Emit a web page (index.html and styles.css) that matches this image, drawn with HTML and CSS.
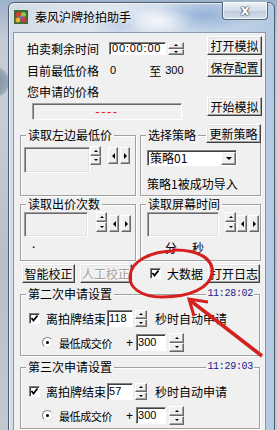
FILE: index.html
```html
<!DOCTYPE html>
<html lang="zh-CN">
<head>
    <meta charset="UTF-8">
    <meta name="viewport" content="width=device-width, initial-scale=1.0">
    <title>秦风沪牌抢拍助手</title>
    <link rel="stylesheet" href="styles.css">
</head>
<body>
<div class="desk">
    <div class="win">
        <div class="titlebar">
            <svg class="app-icon" width="14" height="14" viewBox="0 0 14 14">
                <rect width="14" height="14" fill="#3d6a35"/>
                <circle cx="5" cy="5" r="3" fill="#d8402e"/>
                <circle cx="9.5" cy="4.5" r="2.5" fill="#8cc84b"/>
                <circle cx="4" cy="10" r="2.5" fill="#e6b43a"/>
                <circle cx="9.5" cy="9.5" r="3" fill="#c93a52"/>
                <circle cx="7" cy="7" r="1.5" fill="#4d86d0"/>
            </svg>
            <span class="title">秦风沪牌抢拍助手</span>
            <span class="close-btn">x</span>
        </div>

        <div class="client">
            <div class="top">
                <div class="top-left">
                    <div class="row r1">
                        <span class="lbl">拍卖剩余时间</span>
                        <span class="field timebox">00:00:00</span>
                        <span class="ud ud-time"><i class="up"></i><i class="dn"></i></span>
                    </div>
                    <div class="row r2">
                        <span class="lbl">目前最低价格</span>
                        <span class="num low">0</span>
                        <span class="to">至</span>
                        <span class="num high">300</span>
                    </div>
                    <div class="row r3"><span class="lbl">您申请的价格</span></div>
                    <div class="pricebox"><span class="dash">----</span></div>
                </div>
                <div class="top-right">
                    <button class="btn">打开模拟</button>
                    <button class="btn b-save">保存配置</button>
                    <button class="btn b-start">开始模拟</button>
                </div>
            </div>

            <div class="groups">
                <div class="group">
                    <div class="ghead"><span class="gt">读取左边最低价</span></div>
                    <div class="gbody g1">
                        <span class="readbox rb1"></span>
                        <span class="ud ud-g1"><i class="up"></i><i class="dn"></i></span>
                        <span class="lr lr-g1"><i class="al"></i><i class="ar"></i></span>
                    </div>
                </div>
                <div class="group">
                    <div class="ghead"><span class="gt">选择策略</span><button class="btn b-upd">更新策略</button></div>
                    <div class="gbody g3">
                        <div class="combo"><span class="combo-text">策略01</span><span class="combo-btn"><i class="dn"></i></span></div>
                        <div class="note">策略1被成功导入</div>
                    </div>
                </div>
                <div class="group">
                    <div class="ghead"><span class="gt">读取出价次数</span></div>
                    <div class="gbody g2">
                        <span class="readbox rb2"></span>
                        <span class="ud ud-g2"><i class="up"></i><i class="dn"></i></span>
                        <span class="lr lr-g2"><i class="al"></i><i class="ar"></i></span>
                    </div>
                    <div class="dot">.</div>
                </div>
                <div class="group">
                    <div class="ghead"><span class="gt">读取屏幕时间</span></div>
                    <div class="gbody g4">
                        <span class="readbox rb4"></span>
                        <span class="ud ud-g4"><i class="up"></i><i class="dn"></i></span>
                        <span class="lr lr-g4"><i class="al"></i><i class="ar"></i></span>
                    </div>
                    <div class="minsec"><span>分</span><span class="sec">秒</span></div>
                </div>
            </div>

            <div class="btnrow">
                <button class="btn b-smart">智能校正</button>
                <button class="btn b-manual" disabled>人工校正</button>
                <span class="chk chk-big"><svg width="9" height="9" viewBox="0 0 9 9"><polyline points="1.5,4 3.5,6.5 7.5,1.5" fill="none" stroke="#000" stroke-width="1.8"/></svg></span>
                <span class="chk-text">大数据</span>
                <button class="btn b-log">打开日志</button>
            </div>

            <div class="group apply first">
                <div class="ghead"><span class="gt">第二次申请设置</span><span class="gtime">11:28:02</span></div>
                <div class="arow ar1">
                    <span class="chk"><svg width="9" height="9" viewBox="0 0 9 9"><polyline points="1.5,4 3.5,6.5 7.5,1.5" fill="none" stroke="#000" stroke-width="1.8"/></svg></span>
                    <span class="alabel">离拍牌结束</span>
                    <span class="field inp inp-sec">118</span>
                    <span class="ud ud-r1"><i class="up"></i><i class="dn"></i></span>
                    <span class="atext">秒时自动申请</span>
                </div>
                <div class="arow ar2">
                    <span class="radio"></span>
                    <span class="alabel small">最低成交价</span>
                    <span class="plus">+</span>
                    <span class="field inp inp-add">300</span>
                    <span class="ud ud-r2"><i class="up"></i><i class="dn"></i></span>
                </div>
            </div>

            <div class="group apply">
                <div class="ghead"><span class="gt">第三次申请设置</span><span class="gtime">11:29:03</span></div>
                <div class="arow ar1">
                    <span class="chk"><svg width="9" height="9" viewBox="0 0 9 9"><polyline points="1.5,4 3.5,6.5 7.5,1.5" fill="none" stroke="#000" stroke-width="1.8"/></svg></span>
                    <span class="alabel">离拍牌结束</span>
                    <span class="field inp inp-sec">57</span>
                    <span class="ud ud-r1"><i class="up"></i><i class="dn"></i></span>
                    <span class="atext">秒时自动申请</span>
                </div>
                <div class="arow ar2">
                    <span class="radio"></span>
                    <span class="alabel small">最低成交价</span>
                    <span class="plus">+</span>
                    <span class="field inp inp-add">300</span>
                    <span class="ud ud-r2"><i class="up"></i><i class="dn"></i></span>
                </div>
            </div>
        </div>
    </div>

    <!-- red annotation drawn over the screenshot -->
    <svg class="annot" width="277" height="430" viewBox="0 0 277 430">
        <path d="M172 250 C198 249 214 259 212 273 C210 288 190 297 162 297 C140 297 129 287 130 276 C131 262 149 251 175 251" fill="none" stroke="#d4211f" stroke-width="3"/>
        <path d="M262 356 L191 301" stroke="#d4211f" stroke-width="3.5"/>
        <path d="M208 302 L189 299 L194 316" fill="none" stroke="#d4211f" stroke-width="3"/>
    </svg>
</div>
</body>
</html>
```

FILE: styles.css
```css
* {
    box-sizing: border-box;
    margin: 0;
    padding: 0;
}

body {
    width: 277px;
    height: 430px;
    overflow: hidden;
    font-family: "Noto Sans CJK SC", "Liberation Sans", sans-serif;
    font-size: 12px;
    line-height: 13px;
    color: #000;
}

.desk {
    position: relative;
    width: 277px;
    height: 430px;
    overflow: hidden;
    padding: 2px 0 0 8px;
    background:
        radial-gradient(circle at -6px 82px, #7f8c9b 0, #9ba7b5 14px, rgba(0, 0, 0, 0) 16px),
        linear-gradient(180deg, #9db2c9 0, #c3ccd6 40px, #c8cdd3 120px, #b9bfc6 260px, #c4c9cf 430px);
}

/* window frame (glass) */
.win {
    width: 267px;
    height: 440px;
    padding: 0 8px 0 4px;
    border: 1px solid #4b5c73;
    border-radius: 6px 6px 0 0;
    background:
        radial-gradient(ellipse 34px 14px at 150px 18px, rgba(255, 255, 255, 0.8), rgba(255, 255, 255, 0)),
        radial-gradient(ellipse 50px 18px at 195px 12px, rgba(110, 150, 205, 0.55), rgba(110, 150, 205, 0)),
        radial-gradient(ellipse 30px 16px at 110px 22px, rgba(150, 180, 220, 0.45), rgba(150, 180, 220, 0)),
        linear-gradient(90deg, #d3dce6 0, #dfe7f0 40%, #c9d8e9 70%, #b4c9e0 100%);
    box-shadow: inset 1px 1px 0 rgba(255, 255, 255, 0.6);
}

.titlebar {
    display: flex;
    align-items: flex-start;
    height: 29px;
}

.app-icon {
    margin: 7px 0 0 1px;
}

.title {
    margin: 7px 0 0 7px;
    line-height: 14px;
    text-shadow: 0 0 4px rgba(255, 255, 255, 0.9);
}

.close-btn {
    width: 46px;
    height: 18px;
    margin: -1px -2px 0 auto;
    border: 1px solid #56677e;
    border-top: none;
    border-radius: 0 0 4px 4px;
    background: linear-gradient(180deg, #eef3f8 0, #d3dde9 50%, #bccbdc 51%, #d6e0eb 100%);
    box-shadow: inset 0 0 0 1px rgba(255, 255, 255, 0.7);
    text-align: center;
    font: bold 14px/16px "DejaVu Sans", sans-serif;
    color: #fff;
    text-shadow: 0 0 1px #2c3644, 0 0 1px #2c3644, 0 0 2px #2c3644;
}

/* client area */
.client {
    width: 253px;
    height: 400px;
    background: #f0f0f0;
    border: 1px solid #8a99ad;
}

/* classic controls */
.btn {
    display: block;
    width: 55px;
    height: 19px;
    font: 12px/17px "Noto Sans CJK SC", sans-serif;
    color: #000;
    text-align: center;
    background: #f0f0f0;
    border: 1px solid;
    border-color: #fff #404040 #404040 #fff;
    box-shadow: inset -1px -1px 0 #a0a0a0, inset 1px 1px 0 #e3e3e3;
}

.btn:disabled {
    color: #a0a0a0;
    text-shadow: 1px 1px 0 #fff;
}

.field {
    display: block;
    background: #fff;
    border: 1px solid;
    border-color: #808080 #fff #fff #808080;
    box-shadow: inset 1px 1px 0 #404040;
}

.readbox {
    display: block;
    background: #f0f0f0;
    border: 1px solid;
    border-color: #a0a0a0 #fff #fff #a0a0a0;
    box-shadow: inset 1px 1px 0 #696969, inset -1px -1px 0 #e3e3e3;
}

.ud {
    display: flex;
    flex-direction: column;
}

.ud i,
.lr i,
.combo-btn {
    display: flex;
    align-items: center;
    justify-content: center;
    background: #f0f0f0;
    border: 1px solid;
    border-color: #fff #696969 #696969 #fff;
    box-shadow: inset -1px -1px 0 #a0a0a0;
}

.ud i {
    flex: 1;
}

.up::after,
.dn::after,
.al::after,
.ar::after {
    content: "";
    display: block;
    width: 0;
    height: 0;
}

.up::after {
    border-left: 2px solid transparent;
    border-right: 2px solid transparent;
    border-bottom: 2px solid #000;
}

.dn::after {
    border-left: 2px solid transparent;
    border-right: 2px solid transparent;
    border-top: 2px solid #000;
}

.lr {
    display: flex;
    gap: 2px;
}

.lr i {
    width: 10px;
    height: 17px;
}

.al::after {
    border-top: 3px solid transparent;
    border-bottom: 3px solid transparent;
    border-right: 3px solid #000;
}

.ar::after {
    border-top: 3px solid transparent;
    border-bottom: 3px solid transparent;
    border-left: 3px solid #000;
}

.chk {
    display: flex;
    align-items: center;
    justify-content: center;
    width: 11px;
    height: 11px;
    background: #fff;
    border: 1px solid;
    border-color: #808080 #fff #fff #808080;
    box-shadow: inset 1px 1px 0 #404040;
}

.radio {
    position: relative;
    display: block;
    width: 11px;
    height: 11px;
    border-radius: 50%;
    background: #fff;
    border: 1px solid;
    border-color: #808080 #e3e3e3 #e3e3e3 #808080;
}

.radio::after {
    content: "";
    position: absolute;
    left: 3px;
    top: 3px;
    width: 3px;
    height: 3px;
    border-radius: 50%;
    background: #000;
}

/* top section */
.top {
    display: flex;
    padding: 3px 3px 0 13px;
}

.top-left {
    flex: 1;
}

.row {
    display: flex;
    align-items: center;
    height: 13px;
}

.r1 {
    margin-top: 6px;
}

.r2 {
    margin-top: 9px;
}

.r3 {
    margin-top: 8px;
}

.lbl {
    width: 72px;
}

.timebox {
    width: 57px;
    height: 13px;
    margin-left: 10px;
    padding-left: 2px;
    font: 11px/11px "Liberation Sans", sans-serif;
    letter-spacing: 0.8px;
}

.ud-time {
    width: 16px;
    height: 13px;
    margin-left: 2px;
}

.num {
    font: 11px/13px "Liberation Sans", sans-serif;
}

.low {
    margin-left: 11px;
}

.to {
    margin-left: 33px;
}

.high {
    margin-left: 4px;
}

.pricebox {
    width: 150px;
    height: 17px;
    margin: 5px 0 0 5px;
    background: #f0f0f0;
    border: 1px solid;
    border-color: #a0a0a0 #fff #fff #a0a0a0;
    box-shadow: inset 1px 1px 0 #696969;
    text-align: center;
}

.dash {
    font: 13px/15px "Liberation Sans", sans-serif;
    letter-spacing: 1.5px;
    color: #ff1010;
}

.top-right {
    width: 55px;
}

.b-save {
    margin-top: 3px;
}

.b-start {
    margin-top: 20px;
}

/* group boxes */
.groups {
    display: grid;
    grid-template-columns: 116px 121px;
    grid-template-rows: 61px 57px;
    column-gap: 4px;
    row-gap: 8px;
    margin: 15px 0 0 6px;
}

.group {
    border: 1px solid #a0a0a0;
    box-shadow: inset 1px 1px 0 #fff, 1px 1px 0 #fff;
}

.ghead {
    display: flex;
    align-items: center;
    justify-content: space-between;
    height: 14px;
    margin: -8px 5px 0 5px;
    line-height: 14px;
}

.gt {
    padding: 0 2px;
    background: #f0f0f0;
}

.gtime {
    padding: 0 1px;
    background: #f0f0f0;
    font: 10px/14px "Liberation Mono", monospace;
    letter-spacing: -0.3px;
    color: #1a1a8c;
}

.b-upd {
    margin: -3px -6px 0 0;
}

.gbody {
    display: flex;
    align-items: flex-start;
}

.g1 {
    padding: 4px 0 0 3px;
}

.rb1 {
    width: 66px;
    height: 26px;
    margin-top: 1px;
}

.ud-g1 {
    width: 11px;
    height: 19px;
}

.lr-g1 {
    margin: 1px 0 0 7px;
}

.g2 {
    padding: 1px 0 0 3px;
}

.rb2 {
    width: 64px;
    height: 25px;
}

.ud-g2 {
    width: 11px;
    height: 20px;
    margin-left: 8px;
}

.lr-g2 {
    margin: 3px 0 0 2px;
}

.dot {
    margin: 0 0 0 11px;
    line-height: 12px;
}

.g3 {
    flex-direction: column;
    padding: 8px 0 0 6px;
}

.combo {
    display: flex;
    width: 90px;
    height: 16px;
    background: #fff;
    border: 1px solid;
    border-color: #808080 #fff #fff #808080;
    box-shadow: inset 1px 1px 0 #404040;
}

.combo-text {
    flex: 1;
    padding-left: 2px;
    line-height: 14px;
}

.combo-btn {
    width: 15px;
    margin: 1px 0 0 0;
}

.combo-btn .dn::after {
    border-left-width: 3px;
    border-right-width: 3px;
    border-top-width: 3px;
}

.note {
    margin-top: 11px;
    line-height: 14px;
}

.g4 {
    padding: 1px 0 0 6px;
}

.rb4 {
    width: 72px;
    height: 25px;
}

.ud-g4 {
    width: 11px;
    height: 20px;
    margin-left: 6px;
}

.lr-g4 {
    margin: 3px 0 0 1px;
}

.minsec {
    display: flex;
    margin: 4px 0 0 24px;
    line-height: 14px;
}

.sec {
    margin-left: 15px;
}

/* buttons under the groups */
.btnrow {
    display: flex;
    align-items: center;
    height: 19px;
    margin-top: 3px;
    padding-left: 8px;
}

.b-smart {
    width: 53px;
}

.b-manual {
    width: 52px;
    margin-left: 5px;
}

.chk-big {
    margin-left: 18px;
}

.chk-text {
    margin-left: 6px;
}

.b-log {
    width: 52px;
    margin-left: 5px;
}

/* apply settings */
.apply {
    width: 240px;
    height: 62px;
    margin: 11px 0 0 6px;
}

.arow {
    display: flex;
    align-items: center;
}

.ar1 {
    height: 17px;
    margin-top: 9px;
    padding-left: 8px;
}

.ar2 {
    height: 19px;
    margin-top: 6px;
    padding-left: 21px;
}

.alabel {
    margin-left: 6px;
    line-height: 14px;
}

.alabel.small {
    font-size: 11px;
    letter-spacing: -0.4px;
}

.inp {
    height: 17px;
    padding-left: 1px;
    font: 11px/15px "Liberation Sans", sans-serif;
}

.inp-sec {
    width: 26px;
    margin-left: 1px;
}

.ud-r1 {
    width: 12px;
    height: 17px;
    margin-left: 2px;
}

.atext {
    margin-left: 8px;
    line-height: 14px;
}

.plus {
    margin-left: 14px;
    font: 12px/14px "Liberation Sans", sans-serif;
}

.inp-add {
    width: 30px;
    margin-left: 3px;
}

.ud-r2 {
    width: 15px;
    height: 19px;
    margin-left: 3px;
}

.annot {
    position: absolute;
    left: 0;
    top: 0;
    pointer-events: none;
}
```
